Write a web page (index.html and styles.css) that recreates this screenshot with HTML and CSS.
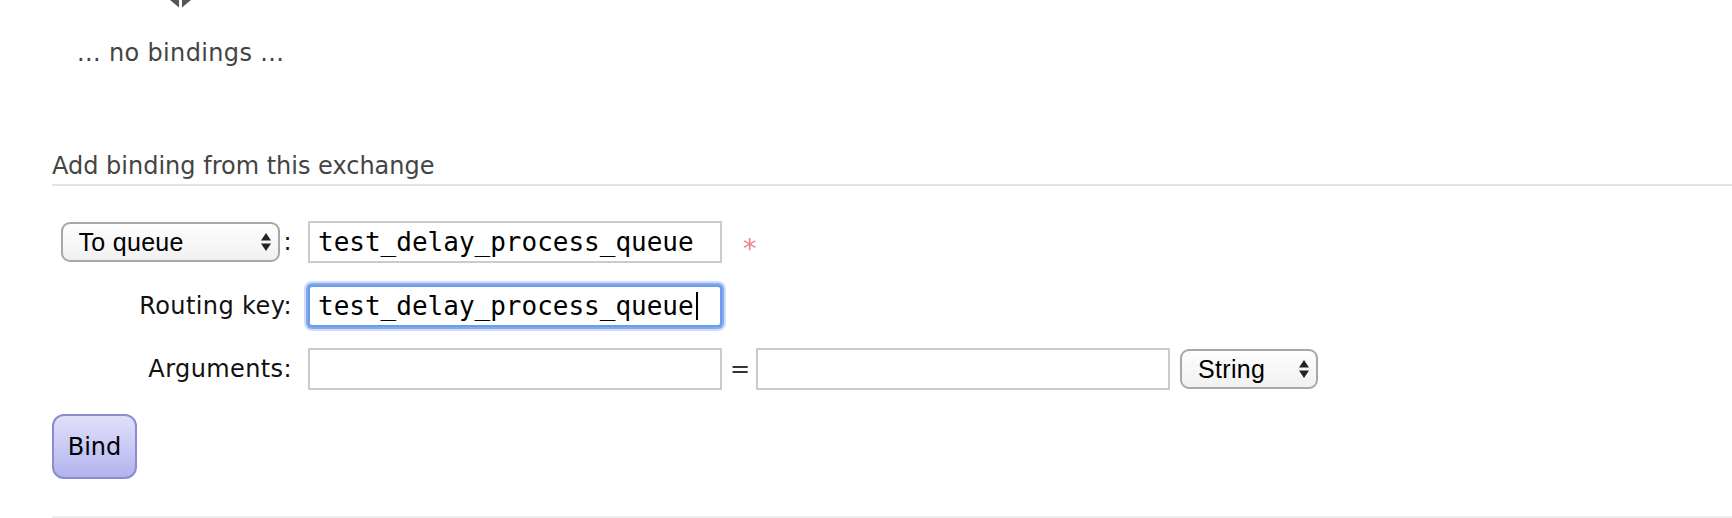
FILE: index.html
```html
<!DOCTYPE html>
<html lang="en">
<head>
<meta charset="utf-8">
<title>Add binding</title>
<link rel="stylesheet" href="styles.css">
</head>
<body>
<div class="page">
  <div class="arrow-stub">
    <svg width="22" height="8" viewBox="0 0 22 8" aria-hidden="true">
      <polygon points="0,0 9,0 9,7.5" fill="#555"/>
      <polygon points="12,0 21,0 12,7.5" fill="#555"/>
    </svg>
  </div>
  <p class="empty">... no bindings ...</p>

  <h2 class="section-title">Add binding from this exchange</h2>

  <form class="binding-form">
    <div class="row">
      <div class="label">
        <span class="select-wrap dest">
          <select class="select"><option>To queue</option><option>To exchange</option></select>
          <svg class="updown" viewBox="0 0 10 18" aria-hidden="true"><polygon points="5,0 10,7.5 0,7.5"/><polygon points="0,10.5 10,10.5 5,18"/></svg>
        </span><span class="colon">:</span>
      </div>
      <input class="field" type="text" value="test_delay_process_queue">
      <span class="required">*</span>
    </div>

    <div class="row">
      <label class="label">Routing key:</label>
      <div class="field focused"><span>test_delay_process_queue</span><span class="caret"></span></div>
    </div>

    <div class="row">
      <label class="label">Arguments:</label>
      <input class="field" type="text" value="">
      <span class="eq">=</span>
      <input class="field" type="text" value="">
      <span class="select-wrap type">
        <select class="select"><option>String</option><option>Number</option><option>List</option></select>
        <svg class="updown" viewBox="0 0 10 18" aria-hidden="true"><polygon points="5,0 10,7.5 0,7.5"/><polygon points="0,10.5 10,10.5 5,18"/></svg>
      </span>
    </div>

    <button class="btn" type="button">Bind</button>
  </form>

  <div class="bottom-rule"></div>
</div>
</body>
</html>
```

FILE: styles.css
```css
html, body {
  margin: 0;
  padding: 0;
  background: #ffffff;
}

body {
  font-family: "DejaVu Sans", Verdana, sans-serif;
  font-size: 24px;
  color: #000;
  overflow: hidden;
}

.page {
  margin-left: 52px;
  height: 518px;
}

.arrow-stub {
  height: 8px;
  padding-left: 118px;
}

.arrow-stub svg {
  display: block;
}

.empty {
  margin: 27px 0 0 25px;
  line-height: 36px;
  color: #444;
  letter-spacing: 0.35px;
}

.section-title {
  margin: 77px 0 0 0;
  font-size: 24px;
  font-weight: normal;
  line-height: 36px;
  color: #444;
  border-bottom: 2px solid #e2e2e2;
}

.binding-form {
  margin-top: 35px;
  display: flex;
  flex-direction: column;
  align-items: flex-start;
  gap: 21.5px;
}

.row {
  display: flex;
  align-items: center;
  height: 42px;
}

.label {
  width: 240px;
  margin-right: 16px;
  display: flex;
  justify-content: flex-end;
  align-items: center;
  color: #111;
  white-space: nowrap;
  letter-spacing: 0.4px;
}

.colon {
  margin-left: 4px;
  color: #111;
}

.select-wrap {
  position: relative;
  display: inline-block;
  height: 40px;
  letter-spacing: 0;
}

.select-wrap.dest { width: 219px; }
.select-wrap.type { width: 138px; margin-left: 10px; }

.select {
  -webkit-appearance: none;
  appearance: none;
  box-sizing: border-box;
  width: 100%;
  height: 40px;
  margin: 0;
  padding: 0 0 0 16px;
  border: 2px solid #a8a8a8;
  border-radius: 9px;
  background: linear-gradient(#fdfdfd, #f1f1f1);
  font-family: "Liberation Sans", Arial, sans-serif;
  font-size: 25px;
  letter-spacing: 0.3px;
  color: #000;
  outline: none;
}

.updown {
  position: absolute;
  right: 9px;
  top: 50%;
  width: 10px;
  height: 18px;
  transform: translateY(-50%);
  fill: #222;
  pointer-events: none;
}

.field {
  box-sizing: border-box;
  width: 414px;
  height: 42px;
  margin: 0;
  padding: 0 8px;
  border: 2px solid #cbcbcb;
  border-radius: 0;
  background: #fff;
  font-family: "DejaVu Sans Mono", "Liberation Mono", monospace;
  font-size: 26px;
  color: #000;
  outline: none;
}

.field.focused {
  display: flex;
  align-items: center;
  border-color: #6c9de8;
  border-radius: 4px;
  box-shadow: 0 0 0 2px #82aaee, 0 0 0 4px rgba(150, 185, 240, 0.45);
  white-space: pre;
}

.caret {
  display: inline-block;
  width: 2px;
  height: 28px;
  margin-left: 2px;
  background: #000;
}

.required {
  margin-left: 21px;
  color: #f08585;
  font-size: 27px;
  padding-top: 12px;
}

.eq {
  margin: 0 6px 0 8px;
  color: #333;
}

.btn {
  box-sizing: border-box;
  width: 85px;
  height: 65px;
  margin-top: 2.5px;
  padding: 0;
  border: 2px solid #8b8bd2;
  border-radius: 12px;
  background: linear-gradient(#e0e0fb, #b3b3ef);
  font-family: "DejaVu Sans", Verdana, sans-serif;
  font-size: 24px;
  color: #000;
  cursor: pointer;
}

.bottom-rule {
  margin-top: 37px;
  height: 2px;
  background: #eeeeee;
}
```
